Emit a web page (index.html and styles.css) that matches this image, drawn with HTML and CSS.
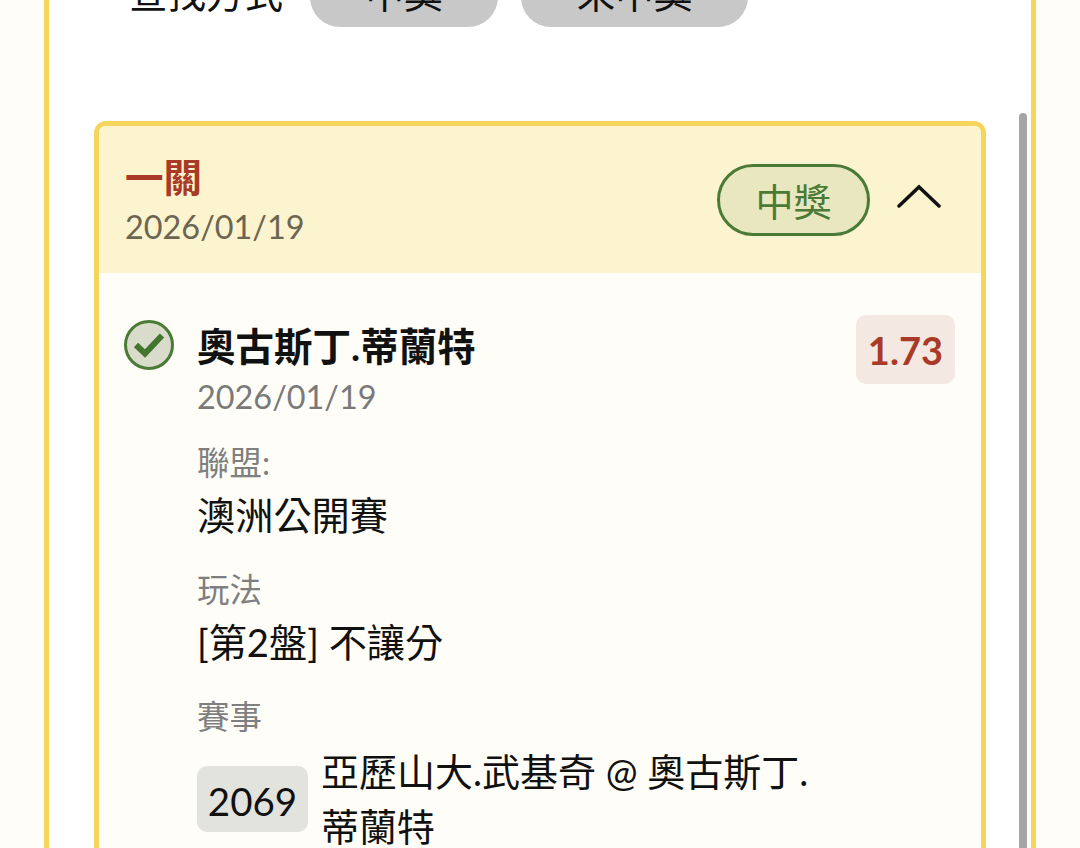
FILE: index.html
```html
<!DOCTYPE html>
<html lang="zh-Hant">

<head>
    <title>投注紀錄</title>
    <meta name="viewport" content="width=device-width,initial-scale=1" />
    <link rel="stylesheet" href="styles.css">
</head>

<body>
    <main class="panel">
        <div class="filter-row">
            <span class="filter-label">查找方式</span>
            <button class="filter-btn filter-btn-win">中獎</button>
            <button class="filter-btn filter-btn-lose">未中獎</button>
        </div>

        <section class="ticket">
            <header class="ticket-head">
                <div class="ticket-title">
                    <h2>一關</h2>
                    <div class="ticket-date">2026/01/19</div>
                </div>
                <span class="status-pill">中獎</span>
                <svg class="chevron" width="44" height="26" viewBox="0 0 44 26" fill="none">
                    <path d="M2 22 L22 3 L42 22" stroke="#111" stroke-width="3.5" stroke-linecap="round" />
                </svg>
            </header>

            <div class="ticket-body">
                <div class="pick-row">
                    <svg class="check" width="50" height="50" viewBox="0 0 50 50">
                        <circle cx="25" cy="25" r="23.5" fill="#d9dccb" stroke="#4a7a35" stroke-width="3" />
                        <path d="M12 25 L21 33.5 L38 15.5" fill="none" stroke="#42752e" stroke-width="6" />
                    </svg>
                    <div class="pick-info">
                        <div class="pick-top">
                            <div>
                                <div class="pick-name">奧古斯丁.蒂蘭特</div>
                                <div class="pick-date">2026/01/19</div>
                            </div>
                            <span class="odds">1.73</span>
                        </div>

                        <div class="field field-first">
                            <div class="field-label">聯盟:</div>
                            <div class="field-value">澳洲公開賽</div>
                        </div>
                        <div class="field">
                            <div class="field-label">玩法</div>
                            <div class="field-value">[第2盤] 不讓分</div>
                        </div>
                        <div class="field">
                            <div class="field-label">賽事</div>
                            <div class="match">
                                <span class="match-no">2069</span>
                                <span class="match-name">亞歷山大.武基奇 @ 奧古斯丁.蒂蘭特</span>
                            </div>
                        </div>
                    </div>
                </div>
            </div>
        </section>
    </main>
    <div class="scrollbar"></div>
</body>

</html>
```

FILE: styles.css
```css
* {
    box-sizing: border-box;
}

html,
body {
    height: 848px;
    overflow: hidden;
}

body {
    margin: 0;
    background: #fefdf7;
    font-family: Lato, "Noto Sans CJK TC", sans-serif;
    color: #111;
}

.panel {
    margin: 0 44px;
    height: 848px;
    padding: 0 45px;
    background: #fff;
    border-left: 5px solid #f5d55c;
    border-right: 5px solid #f5d55c;
    overflow: hidden;
}

.filter-row {
    display: flex;
    align-items: center;
    height: 72px;
    margin-top: -45px;
    margin-bottom: 94px;
    padding-left: 35px;
}

.filter-label {
    font-size: 38.5px;
    margin-right: 27px;
}

.filter-btn {
    height: 72px;
    border: 0;
    border-radius: 30px;
    background: #c8c8c8;
    font: inherit;
    font-size: 38.5px;
    color: #111;
}

.filter-btn-win {
    width: 188px;
    margin-right: 23px;
}

.filter-btn-lose {
    width: 227px;
}

.ticket {
    border: 5px solid #f5d55c;
    border-radius: 12px;
    background: #fefdf7;
}

.ticket-head {
    display: flex;
    align-items: center;
    height: 147px;
    padding: 0 40px 0 26px;
    background: #fcf3cf;
    border-radius: 6px 6px 0 0;
}

.ticket-title {
    flex: 1;
    padding-top: 2px;
}

.ticket-title h2 {
    margin: 0;
    font-size: 38.5px;
    line-height: 50px;
    color: #a93a27;
}

.ticket-date {
    margin-top: 3px;
    font-size: 32.4px;
    line-height: 44px;
    color: #6b6651;
}

.status-pill {
    display: flex;
    align-items: center;
    justify-content: center;
    width: 153px;
    height: 72px;
    margin-right: 27px;
    border: 3px solid #4a7a35;
    border-radius: 36px;
    background: #e9e7bf;
    font-size: 38px;
    color: #4a7a35;
}

.chevron {
    margin-bottom: 6px;
}

.ticket-body {
    padding: 42px 26px 60px 25px;
}

.pick-row {
    display: flex;
    gap: 23px;
}

.check {
    flex: none;
    margin-top: 5px;
}

.pick-info {
    flex: 1;
}

.pick-top {
    display: flex;
    justify-content: space-between;
    align-items: flex-start;
}

.pick-name {
    font-size: 38.5px;
    font-weight: 700;
    line-height: 62px;
}

.pick-date {
    font-size: 32.4px;
    line-height: 40px;
    color: #7a7a7a;
}

.odds {
    padding: 0 12px;
    height: 69px;
    line-height: 71px;
    border-radius: 10px;
    background: #f4e8e3;
    font-size: 38px;
    font-weight: 700;
    color: #a93a27;
}

.field {
    margin-top: 23px;
}

.field-first {
    margin-top: 24px;
}

.field-label {
    font-size: 32.5px;
    line-height: 44px;
    color: #7f7f7f;
}

.field-value {
    font-size: 38.2px;
    line-height: 60px;
}

.match {
    display: flex;
    align-items: center;
    gap: 13px;
    margin: 5px 0 0;
}

.match-no {
    flex: none;
    width: 111px;
    height: 66px;
    border-radius: 10px;
    background: #e3e3de;
    font-size: 38.5px;
    line-height: 70px;
    text-align: center;
}

.match-name {
    width: 500px;
    font-size: 38px;
    line-height: 55px;
}

.scrollbar {
    position: absolute;
    top: 113px;
    left: 1019px;
    width: 8px;
    height: 735px;
    border-radius: 4px 4px 0 0;
    background: #a5a5a5;
}
```
